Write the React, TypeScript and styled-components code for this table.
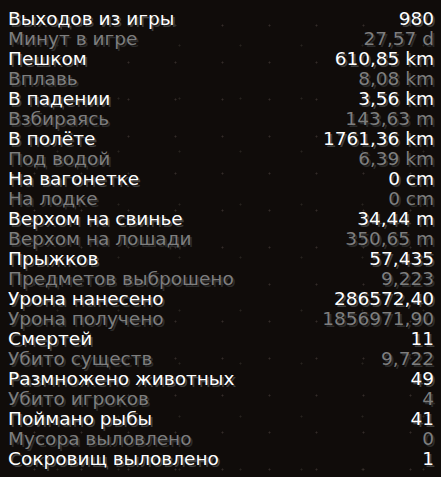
import React from "react";
import styled, { createGlobalStyle } from "styled-components";

const Global = createGlobalStyle`
  html, body { margin: 0; padding: 0; background: #100c0a; }
  body { width: 441px; height: 477px; overflow: hidden; }
`;

const Screen = styled.div`
  width: 441px;
  height: 477px;
  box-sizing: border-box;
  padding: 9px 7px 8px 8px;
  background-color: #100c0a;
  background-image:
    radial-gradient(circle, rgba(60,52,48,0.8) 0.8px, transparent 1.2px),
    radial-gradient(circle, rgba(50,44,40,0.7) 0.8px, transparent 1.2px);
  background-size: 47px 37px, 61px 53px;
  background-position: 11px 7px, 27px 19px;
  display: flex;
  flex-direction: column;
`;

const Row = styled.div<{ $dim: boolean }>`
  height: 20px;
  display: flex;
  align-items: center;
  justify-content: space-between;
  font-family: "DejaVu Sans", sans-serif;
  font-size: 18.5px;
  letter-spacing: 0;
  line-height: 20px;
  color: ${(p) => (p.$dim ? "#7e7e7e" : "#ffffff")};
  text-shadow: 2px 2px 0 ${(p) => (p.$dim ? "#2b2b2b" : "#3f3f3f")};
  white-space: nowrap;
`;

const Label = styled.span``;
const Value = styled.span``;

const stats: [string, string][] = [
  ["Выходов из игры", "980"],
  ["Минут в игре", "27,57 d"],
  ["Пешком", "610,85 km"],
  ["Вплавь", "8,08 km"],
  ["В падении", "3,56 km"],
  ["Взбираясь", "143,63 m"],
  ["В полёте", "1761,36 km"],
  ["Под водой", "6,39 km"],
  ["На вагонетке", "0 cm"],
  ["На лодке", "0 cm"],
  ["Верхом на свинье", "34,44 m"],
  ["Верхом на лошади", "350,65 m"],
  ["Прыжков", "57,435"],
  ["Предметов выброшено", "9,223"],
  ["Урона нанесено", "286572,40"],
  ["Урона получено", "1856971,90"],
  ["Смертей", "11"],
  ["Убито существ", "9,722"],
  ["Размножено животных", "49"],
  ["Убито игроков", "4"],
  ["Поймано рыбы", "41"],
  ["Мусора выловлено", "0"],
  ["Сокровищ выловлено", "1"],
];

export default function App() {
  return (
    <>
      <Global />
      <Screen>
        {stats.map(([l, v], i) => (
          <Row key={l} $dim={i % 2 === 1}>
            <Label>{l}</Label>
            <Value>{v}</Value>
          </Row>
        ))}
      </Screen>
    </>
  );
}
